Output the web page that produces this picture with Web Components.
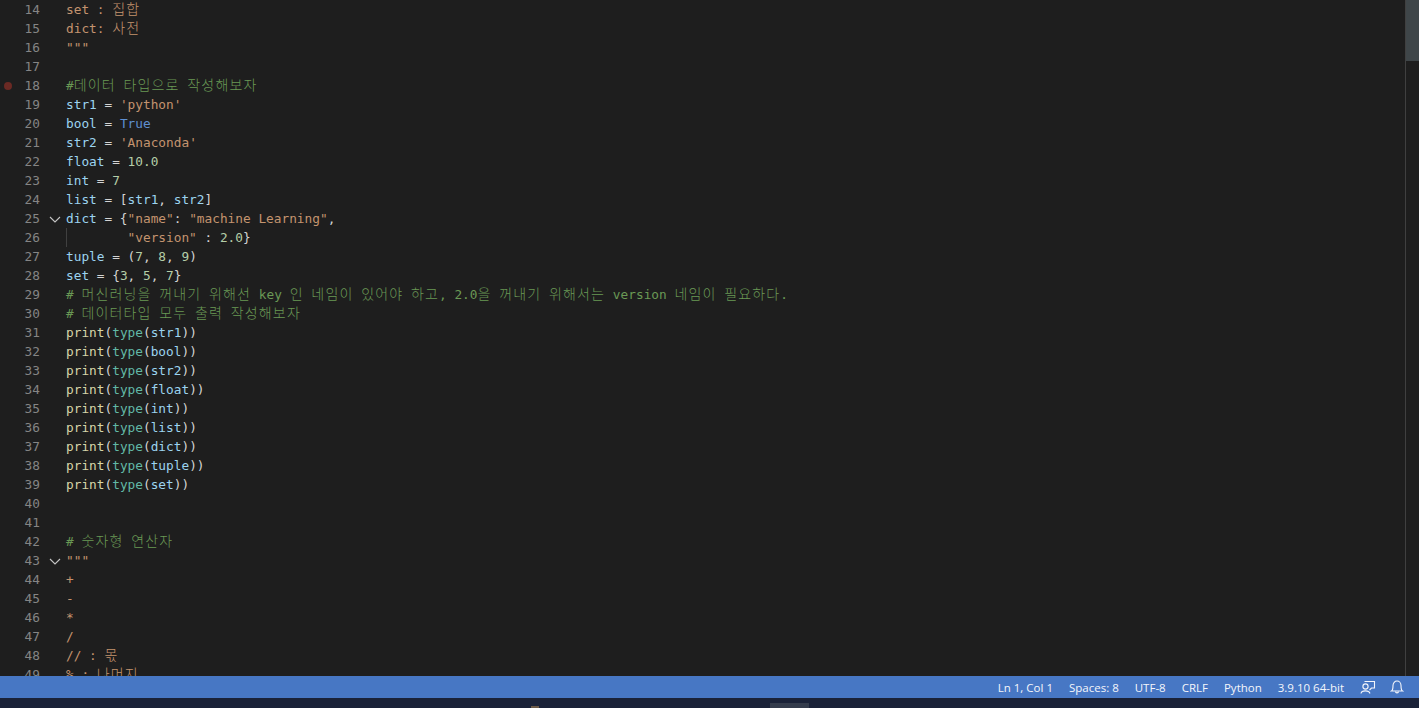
<!DOCTYPE html>
<html lang="ko">
<head>
<meta charset="utf-8">
<title>editor</title>
<style>
  html, body { margin: 0; height: 100%; background: #1e1e1e; overflow: hidden; }
</style>
</head>
<body>
<vs-window></vs-window>
<script>
// token colours, a little duller than the theme because the capture is dithered
const colors = {
    v: '#9cd4f0', s: '#c4946f', c: '#6a9955', k: '#5f8fd0',
    f: '#d6d6a8', t: '#62b9a6', n: '#b5cea8', o: '#d4d4d4'
};

const source = [
    [14, [['s', 'set : 집합']]],
    [15, [['s', 'dict: 사전']]],
    [16, [['s', '"""']]],
    [17, []],
    [18, [['c', '#데이터 타입으로 작성해보자']], { breakpoint: true }],
    [19, [['v', 'str1'], ['o', ' = '], ['s', "'python'"]]],
    [20, [['v', 'bool'], ['o', ' = '], ['k', 'True']]],
    [21, [['v', 'str2'], ['o', ' = '], ['s', "'Anaconda'"]]],
    [22, [['v', 'float'], ['o', ' = '], ['n', '10.0']]],
    [23, [['v', 'int'], ['o', ' = '], ['n', '7']]],
    [24, [['v', 'list'], ['o', ' = ['], ['v', 'str1'], ['o', ', '], ['v', 'str2'], ['o', ']']]],
    [25, [['v', 'dict'], ['o', ' = {'], ['s', '"name"'], ['o', ': '], ['s', '"machine Learning"'], ['o', ',']], { fold: true }],
    [26, [['o', '        '], ['s', '"version"'], ['o', ' : '], ['n', '2.0'], ['o', '}']], { guide: true }],
    [27, [['v', 'tuple'], ['o', ' = ('], ['n', '7'], ['o', ', '], ['n', '8'], ['o', ', '], ['n', '9'], ['o', ')']]],
    [28, [['v', 'set'], ['o', ' = {'], ['n', '3'], ['o', ', '], ['n', '5'], ['o', ', '], ['n', '7'], ['o', '}']]],
    [29, [['c', '# 머신러닝을 꺼내기 위해선 key 인 네임이 있어야 하고, 2.0을 꺼내기 위해서는 version 네임이 필요하다.']]],
    [30, [['c', '# 데이터타입 모두 출력 작성해보자']]],
    ...['str1', 'bool', 'str2', 'float', 'int', 'list', 'dict', 'tuple', 'set'].map((name, i) =>
        [31 + i, [['f', 'print'], ['o', '('], ['t', 'type'], ['o', '('], ['v', name], ['o', '))']]]),
    [40, []],
    [41, []],
    [42, [['c', '# 숫자형 연산자']]],
    [43, [['s', '"""']], { fold: true }],
    [44, [['s', '+']]],
    [45, [['s', '-']]],
    [46, [['s', '*']]],
    [47, [['s', '/']]],
    [48, [['s', '// : 몫']]],
    [49, [['s', '% : 나머지']]]
];

class CodeToken extends HTMLElement {
    constructor() {
        super();
        this.attachShadow({ mode: 'open' });
        this.shadowRoot.innerHTML = `<style>
            :host { display: inline; color: var(--tok, #d4d4d4); white-space: pre; }
        </style><slot></slot>`;
    }
    connectedCallback() {
        this.style.setProperty('--tok', colors[this.getAttribute('kind')]);
    }
}
customElements.define('code-token', CodeToken);

// hangul runs get their own size, they are wider than the latin cell
class HangulRun extends HTMLElement {
    constructor() {
        super();
        this.attachShadow({ mode: 'open' });
        this.shadowRoot.innerHTML = `<style>
            :host { display: inline; font: 300 14px "Noto Sans CJK KR", sans-serif; letter-spacing: 1.15px; line-height: 1; }
        </style><slot></slot>`;
    }
}
customElements.define('hangul-run', HangulRun);

const lineTemplate = document.createElement('template');
lineTemplate.innerHTML = /*html*/ `
    <style>
        :host {
            display: flex;
            height: 19px;
            line-height: 19px;
            white-space: pre;
        }
        .margin { flex: 0 0 15px; display: flex; align-items: center; justify-content: center; }
        .dot { width: 8px; height: 8px; border-radius: 50%; background: #6b2a24; display: none; }
        .num { flex: 0 0 25px; box-sizing: border-box; text-align: right; color: #858585; }
        .fold { flex: 0 0 26px; display: flex; align-items: center; justify-content: flex-end; padding-right: 5px; box-sizing: border-box; }
        .fold svg { display: none; }
        .text { flex: 1; position: relative; }
        .guide { display: none; position: absolute; left: 0; top: 0; bottom: 0; width: 1px; background: #404040; }
        :host([breakpoint]) .dot { display: block; }
        :host([fold]) .fold svg { display: block; }
        :host([guide]) .guide { display: block; }
    </style>
    <div class="margin"><span class="dot"></span></div>
    <div class="num"></div>
    <div class="fold">
        <svg width="12" height="12" viewBox="0 0 12 12" fill="none" stroke="#c5c5c5" stroke-width="1.1">
            <path d="M1 4 L6 9 L11 4"/>
        </svg>
    </div>
    <div class="text"><span class="guide"></span><slot></slot></div>
`;

class CodeLine extends HTMLElement {
    constructor() {
        super();
        this.attachShadow({ mode: 'open' });
        this.shadowRoot.appendChild(lineTemplate.content.cloneNode(true));
    }
    connectedCallback() {
        this.shadowRoot.querySelector('.num').textContent = this.getAttribute('number');
    }
}
customElements.define('code-line', CodeLine);

const editorTemplate = document.createElement('template');
editorTemplate.innerHTML = /*html*/ `
    <style>
        :host {
            display: flex;
            flex: 1;
            min-height: 0;
            background: #1e1e1e;
            overflow: hidden;
        }
        .lines {
            flex: 1;
            min-width: 0;
            font: 12.79px "DejaVu Sans Mono", "Noto Sans CJK KR", monospace;
        }
        .scrollbar {
            flex: 0 0 13px;
            border-left: 1px solid #404040;
        }
        .slider { height: 61px; background: #3f4649; }
    </style>
    <div class="lines"><slot></slot></div>
    <div class="scrollbar"><div class="slider"></div></div>
`;

class CodeEditor extends HTMLElement {
    constructor() {
        super();
        this.attachShadow({ mode: 'open' });
        this.shadowRoot.appendChild(editorTemplate.content.cloneNode(true));
    }
    connectedCallback() {
        source.forEach(([number, tokens, flags = {}]) => {
            const line = document.createElement('code-line');
            line.setAttribute('number', number);
            Object.keys(flags).forEach(flag => line.setAttribute(flag, ''));
            tokens.forEach(([kind, text]) => {
                const token = document.createElement('code-token');
                token.setAttribute('kind', kind);
                text.split(/([\uac00-\ud7a3]+)/).forEach((part, i) => {
                    if (!part) return;
                    if (i % 2) {
                        const run = document.createElement('hangul-run');
                        run.textContent = part;
                        token.appendChild(run);
                    } else {
                        token.appendChild(document.createTextNode(part));
                    }
                });
                line.appendChild(token);
            });
            this.appendChild(line);
        });
    }
}
customElements.define('code-editor', CodeEditor);

class StatusItem extends HTMLElement {
    constructor() {
        super();
        this.attachShadow({ mode: 'open' });
        this.shadowRoot.innerHTML = `<style>
            :host { display: flex; align-items: center; height: 100%; }
            :host([tight]) { margin-left: -2px; }
        </style><slot></slot>`;
    }
}
customElements.define('status-item', StatusItem);

const statusTemplate = document.createElement('template');
statusTemplate.innerHTML = /*html*/ `
    <style>
        :host {
            display: flex;
            flex: 0 0 22px;
            justify-content: flex-end;
            gap: 16px;
            padding-right: 15px;
            background: #4777c4;
            color: #f4f6fb;
            font: 11.5px "Open Sans", "Liberation Sans", sans-serif;
        }
    </style>
    <slot></slot>
`;

class StatusBar extends HTMLElement {
    constructor() {
        super();
        this.attachShadow({ mode: 'open' });
        this.shadowRoot.appendChild(statusTemplate.content.cloneNode(true));
    }
}
customElements.define('status-bar', StatusBar);

const windowTemplate = document.createElement('template');
windowTemplate.innerHTML = /*html*/ `
    <style>
        :host {
            display: flex;
            flex-direction: column;
            height: 708px;
            background: #1a2238;
        }
        .strip { flex: 0 0 10px; background: #1a2238; position: relative; overflow: hidden; }
        .strip span { position: absolute; }
        .blob { left: 531px; top: 8px; width: 8px; height: 2px; background: #6b5a48; }
        .task { left: 770px; top: 5px; width: 39px; height: 5px; background: #343c4c; }
    </style>
    <code-editor></code-editor>
    <status-bar>
        <status-item>Ln 1, Col 1</status-item>
        <status-item>Spaces: 8</status-item>
        <status-item>UTF-8</status-item>
        <status-item>CRLF</status-item>
        <status-item>Python</status-item>
        <status-item>3.9.10 64-bit</status-item>
        <status-item>
            <svg width="16" height="14" viewBox="0 0 16 14" fill="none" stroke="#f4f6fb" stroke-width="1.1">
                <path d="M4.5 1.5 L14.5 1.5 L14.5 8 L11.5 8 L9.5 10"/>
                <circle cx="5.5" cy="6.5" r="2.6"/>
                <path d="M1 13.5 C1.5 10 9 10 10 13.5"/>
            </svg>
        </status-item>
        <status-item tight>
            <svg width="14" height="14" viewBox="0 0 14 14" fill="none" stroke="#f4f6fb" stroke-width="1.1">
                <path d="M1.5 11 C3 10 3 8 3 5.5 C3 3 4.8 1 7 1 C9.2 1 11 3 11 5.5 C11 8 11 10 12.5 11 Z"/>
                <path d="M5.5 11.5 C5.5 13.3 8.5 13.3 8.5 11.5"/>
            </svg>
        </status-item>
    </status-bar>
    <div class="strip"><span class="blob"></span><span class="task"></span></div>
`;

class VsWindow extends HTMLElement {
    constructor() {
        super();
        this.attachShadow({ mode: 'open' });
        this.shadowRoot.appendChild(windowTemplate.content.cloneNode(true));
    }
}
customElements.define('vs-window', VsWindow);
</script>
</body>
</html>
